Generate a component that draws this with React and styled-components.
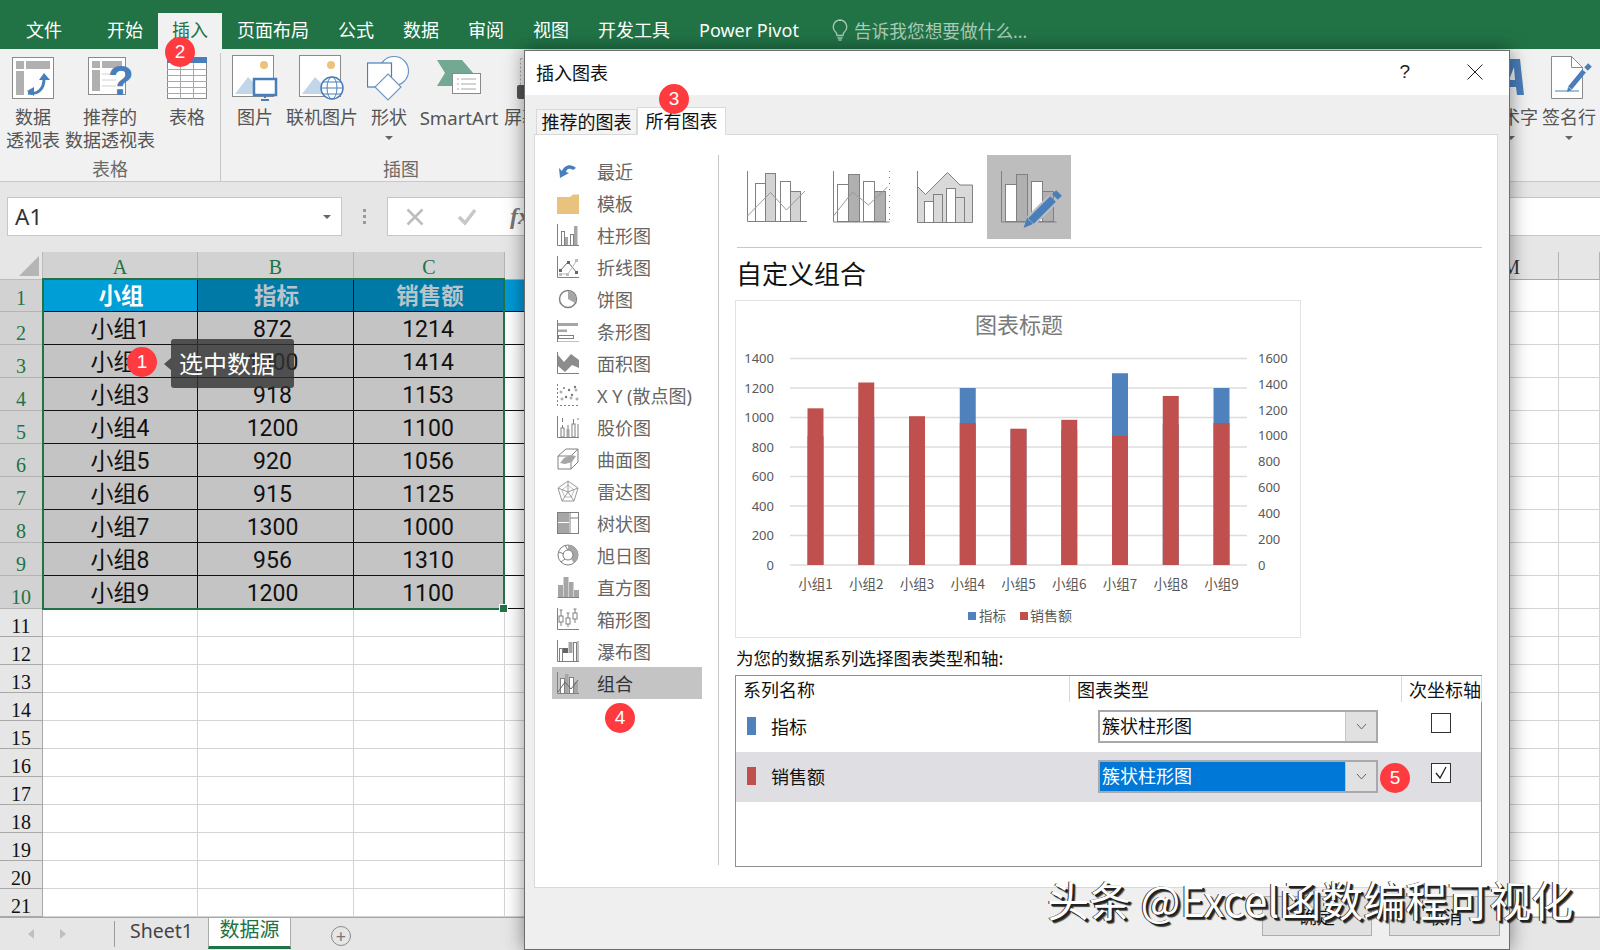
import React from "react";
import styled, { createGlobalStyle } from "styled-components";

const FONT = `"Noto Sans", "Noto Sans CJK SC", sans-serif`;
const CJK = `"Noto Sans CJK SC", "Noto Sans", sans-serif`;
const SERIF = `"Liberation Serif", serif`;

const GlobalStyle = createGlobalStyle`
  html, body { margin: 0; padding: 0; background: #fff; }
  * { box-sizing: border-box; }
  body { font-family: ${FONT}; }
`;

const Page = styled.div`
  position: relative;
  width: 1600px;
  height: 950px;
  overflow: hidden;
  display: flex;
  flex-direction: column;
  background: #fff;
`;

/* ---------- title tabs ---------- */
const TabBar = styled.div`
  height: 49px;
  flex: none;
  background: #217346;
  display: flex;
  align-items: flex-end;
  gap: 1px;
  padding-left: 12px;
`;

const MenuTab = styled.div`
  height: 36px;
  padding: 0 14px;
  display: flex;
  align-items: center;
  font-size: 18px;
  line-height: 1;
  padding-bottom: 2px;
  white-space: nowrap;
  color: ${(p) => (p.$active ? "#217346" : "#fff")};
  background: ${(p) => (p.$active ? "#f1f1f1" : "transparent")};
  margin-left: ${(p) => (p.$first ? "16px" : "0")};
`;

const TellMe = styled.div`
  height: 36px;
  margin-left: 18px;
  padding-bottom: 2px;
  display: flex;
  align-items: center;
  gap: 6px;
  font-size: 17.7px;
  color: #a9cbb8;
`;

/* ---------- ribbon ---------- */
const Ribbon = styled.div`
  height: 133px;
  flex: none;
  background: #f1f1f1;
  border-bottom: 1px solid #c9c9c9;
  display: flex;
  overflow: hidden;
`;

const Group = styled.div`
  display: flex;
  flex-direction: column;
  height: 128px;
  border-right: ${(p) => (p.$sep ? "1px solid #c6c6c6" : "none")};
  margin-top: 4px;
`;

const GroupButtons = styled.div`
  display: flex;
  height: 105px;
`;

const GroupLabel = styled.div`
  text-align: center;
  font-size: 18px;
  line-height: 24px;
  color: #6a6a6a;
`;

const RibbonButton = styled.div`
  width: ${(p) => p.$w}px;
  flex: none;
  display: flex;
  flex-direction: column;
  align-items: ${(p) => (p.$start ? "flex-start" : "center")};
  padding-left: ${(p) => (p.$start ? "9px" : "0")};
  color: #555;
  font-size: ${(p) => p.$fs || 18}px;
  line-height: 23px;
  text-align: center;
  white-space: nowrap;
`;

const RibbonIcon = styled.div`
  height: 50px;
  margin-bottom: 3px;
  margin-left: ${(p) => p.$shift || 0}px;
  display: flex;
  align-items: center;
`;

const Caret = styled.span`
  display: block;
  margin-top: ${(p) => (p.$flat ? "0" : "7px")};
  border-left: 4px solid transparent;
  border-right: 4px solid transparent;
  border-top: 4px solid #666;
`;

const RightGroup = styled.div`
  margin-left: auto;
  margin-top: 4px;
  display: flex;
`;

/* ---------- formula bar ---------- */
const FormulaRow = styled.div`
  height: 70px;
  flex: none;
  background: #e6e6e6;
  display: flex;
  align-items: flex-start;
  padding: 15px 0 0 7px;
`;

const NameBox = styled.div`
  width: 335px;
  height: 39px;
  background: #fff;
  border: 1px solid #c6c6c6;
  display: flex;
  align-items: center;
  justify-content: space-between;
  padding: 0 10px 0 7px;
  font-size: 22.5px;
  color: #333;
`;

const Dots = styled.div`
  width: 45px;
  height: 39px;
  display: flex;
  flex-direction: column;
  align-items: center;
  justify-content: center;
  gap: 3px;
  > i { width: 3px; height: 3px; background: #9a9a9a; display: block; }
`;

const FormulaBox = styled.div`
  flex: 1;
  height: 39px;
  background: #fff;
  border: 1px solid #c6c6c6;
  border-right: none;
  display: flex;
  align-items: center;
  padding-left: 18px;
  gap: 33px;
  font-family: ${SERIF};
  font-style: italic;
  font-weight: 700;
  font-size: 24px;
  color: #777;
`;

/* ---------- sheet ---------- */
const COLS = "43px 155px 156px 151px 100px 954px 41px";

const Sheet = styled.div`
  position: relative;
  flex: none;
`;

const SheetRow = styled.div`
  display: grid;
  grid-template-columns: ${COLS};
  height: ${(p) => p.$h}px;
`;

const Corner = styled.div`
  background: #e6e6e6;
  border-bottom: 1px solid #bbb;
  border-right: 1px solid #bbb;
  display: flex;
  align-items: flex-end;
  justify-content: flex-end;
  padding: 0 3px 3px 0;
`;

const ColHead = styled.div`
  background: ${(p) => (p.$sel ? "#d2d2d2" : "#e6e6e6")};
  border-right: 1px solid #b4b4b4;
  border-bottom: 1px solid #a8a8a8;
  font-family: ${SERIF};
  font-size: 20px;
  color: ${(p) => (p.$sel ? "#217346" : "#333")};
  display: flex;
  align-items: flex-end;
  justify-content: ${(p) => (p.$end ? "flex-end" : "center")};
  padding-right: ${(p) => (p.$end ? "38px" : "0")};
`;

const RowHead = styled.div`
  background: ${(p) => (p.$sel ? "#d2d2d2" : "#e6e6e6")};
  border-right: 1px solid #a8a8a8;
  border-bottom: 1px solid ${(p) => (p.$sel ? "#b4b4b4" : "#a8a8a8")};
  font-family: ${SERIF};
  font-size: 20px;
  line-height: 1;
  color: ${(p) => (p.$sel ? "#217346" : "#111")};
  display: flex;
  align-items: flex-end;
  justify-content: center;
  padding-bottom: ${(p) => p.$bottom || 0}px;
`;

const Cell = styled.div`
  background: ${(p) => p.$bg || "#fff"};
  color: ${(p) => p.$color || "#111"};
  font-family: "Roboto", ${CJK};
  font-size: ${(p) => (p.$bold ? "22.5px" : "23px")};
  font-weight: ${(p) => (p.$bold ? 700 : 400)};
  border-right: 1px solid ${(p) => p.$line || "#d4d4d4"};
  border-bottom: 1px solid ${(p) => p.$line || "#d4d4d4"};
  display: flex;
  align-items: center;
  justify-content: center;
  line-height: 1;
  padding-top: ${(p) => (p.$bold ? "2px" : "3px")};
  padding-left: ${(p) => (p.$bold ? "2px" : "0")};
  padding-right: ${(p) => p.$nudge || 0}px;
`;

const SelectionFrame = styled.div`
  position: absolute;
  left: 42px;
  top: 26px;
  width: 463px;
  height: 332px;
  border: 2px solid #217346;
  pointer-events: none;
  &::after {
    content: "";
    position: absolute;
    right: -5px;
    bottom: -5px;
    width: 7px;
    height: 7px;
    background: #217346;
    border: 1px solid #fff;
  }
`;

const SheetTabs = styled.div`
  flex: 1;
  background: #e6e6e6;
  border-top: 1px solid #a8a8a8;
  display: flex;
  align-items: stretch;
  padding-left: 28px;
  color: #444;
`;

const ScrollArrows = styled.div`
  width: 87px;
  margin: 3px 0;
  border-right: 1px solid #9c9c9c;
  display: flex;
  align-items: center;
  gap: 26px;
`;

const ArrowLeft = styled.i`
  width: 0;
  height: 0;
  border-top: 5px solid transparent;
  border-bottom: 5px solid transparent;
  border-right: 6px solid #c0c0c0;
`;

const ArrowRight = styled(ArrowLeft)`
  border-right: none;
  border-left: 6px solid #c0c0c0;
`;

const SheetTab = styled.div`
  height: ${(p) => (p.$active ? "31px" : "auto")};
  width: ${(p) => p.$w}px;
  display: flex;
  align-items: center;
  justify-content: center;
  font-size: ${(p) => (p.$active ? "20px" : "19.5px")};
  line-height: 1;
  padding-bottom: ${(p) => (p.$active ? "4px" : "7px")};
  background: ${(p) => (p.$active ? "#fff" : "transparent")};
  color: ${(p) => (p.$active ? "#217346" : "#444")};
  border-bottom: ${(p) => (p.$active ? "3px solid #217346" : "none")};
  border-left: ${(p) => (p.$active ? "1px solid #ababab" : "none")};
  border-right: ${(p) => (p.$active ? "1px solid #ababab" : "none")};
`;

const AddSheet = styled.div`
  width: 20px;
  height: 20px;
  border-radius: 50%;
  border: 1.5px solid #8a8a8a;
  margin: 8px 0 0 40px;
  display: flex;
  align-items: center;
  justify-content: center;
  font-size: 18px;
  line-height: 1;
  color: #777;
`;

/* ---------- overlays ---------- */
const Badge = styled.div`
  position: absolute;
  left: ${(p) => p.$x - 15}px;
  top: ${(p) => p.$y - 15}px;
  width: 30px;
  height: 30px;
  border-radius: 50%;
  background: #ff3b3f;
  color: #fff;
  font-family: "Liberation Sans", sans-serif;
  font-size: 19px;
  display: flex;
  align-items: center;
  justify-content: center;
  z-index: 5;
`;

const Tip = styled.div`
  position: absolute;
  left: 171px;
  top: 339px;
  width: 123px;
  height: 49px;
  background: rgba(50, 50, 50, 0.8);
  border-radius: 3px;
  color: #fff;
  font-size: 24px;
  line-height: 1;
  display: flex;
  align-items: center;
  padding: 0 0 2px 8px;
  font-family: ${CJK};
  z-index: 4;
  &::before {
    content: "";
    position: absolute;
    left: -7px;
    top: 19px;
    border-top: 6px solid transparent;
    border-bottom: 6px solid transparent;
    border-right: 7px solid rgba(50, 50, 50, 0.8);
  }
`;

const Watermark = styled.div`
  position: absolute;
  left: 1047px;
  top: 871px;
  font-family: ${CJK};
  font-size: 42px;
  line-height: 56px;
  white-space: nowrap;
  color: #fff;
  text-shadow: 2px 2px 0 #222, 3px 3px 1px #444, -1px 0 0 #333;
  z-index: 6;
`;

/* ---------- dialog ---------- */
const Dialog = styled.div`
  position: absolute;
  left: 524px;
  top: 50px;
  width: 986px;
  height: 900px;
  background: #efefef;
  border: 1px solid #6d6d6d;
  box-shadow: 0 0 18px rgba(0, 0, 0, 0.45);
  display: flex;
  flex-direction: column;
  font-family: ${CJK};
  z-index: 3;
`;

const DialogTitle = styled.div`
  height: 44px;
  flex: none;
  background: #fff;
  display: flex;
  align-items: center;
  padding: 0 26px 3px 11px;
  font-size: 18px;
  color: #111;
`;

const HelpMark = styled.div`
  margin-left: auto;
  font-family: "Liberation Sans", sans-serif;
  font-size: 19px;
  margin-right: 57px;
  color: #222;
`;

const DialogTabs = styled.div`
  height: 39px;
  flex: none;
  display: flex;
  align-items: flex-end;
  padding-left: 11px;
`;

const DialogTab = styled.div`
  height: ${(p) => (p.$active ? "28px" : "25px")};
  width: ${(p) => p.$w}px;
  font-size: 18px;
  line-height: 1;
  display: flex;
  align-items: center;
  justify-content: center;
  padding-bottom: 2px;
  color: #111;
  background: ${(p) => (p.$active ? "#fff" : "#f3f3f3")};
  border: 1px solid #d9d9d9;
  border-bottom: ${(p) => (p.$active ? "1px solid #fff" : "none")};
  margin-bottom: ${(p) => (p.$active ? "-1px" : "0")};
  position: relative;
  z-index: 1;
`;

const Panel = styled.div`
  height: 754px;
  width: 964px;
  flex: none;
  margin-left: 9px;
  background: #fff;
  border: 1px solid #d9d9d9;
  padding-top: 20px;
  display: flex;
  align-items: flex-start;
`;

const Nav = styled.div`
  width: 184px;
  height: 710px;
  flex: none;
  border-right: 1px solid #c8c8c8;
  padding-left: 17px;
`;

const NavItem = styled.div`
  width: 150px;
  height: 32px;
  display: flex;
  align-items: center;
  padding-left: 5px;
  gap: 18px;
  font-family: ${FONT};
  font-size: 18px;
  white-space: nowrap;
  color: ${(p) => (p.$active ? "#333" : "#666")};
  background: ${(p) => (p.$active ? "#c4c4c4" : "transparent")};
`;

const Content = styled.div`
  width: 764px;
  padding-left: 16px;
`;

const ThumbRow = styled.div`
  display: flex;
  height: 93px;
  border-bottom: 1px solid #c8c8c8;
  margin-left: 2px;
  width: 745px;
`;

const Thumb = styled.div`
  width: 84px;
  height: 84px;
  margin-left: ${(p) => (p.$first ? "-2px" : "0")};
  background: ${(p) => (p.$active ? "#bdbdbd" : "transparent")};
`;

const Heading = styled.div`
  height: 52px;
  font-size: 26px;
  line-height: 50px;
  padding-left: 1px;
  color: #111;
`;

const ChartBox = styled.div`
  width: 566px;
  height: 338px;
  border: 1px solid #e3e3e3;
`;

const SeriesLabel = styled.div`
  height: 37px;
  font-size: 17.5px;
  line-height: 40px;
  padding-left: 1px;
  color: #111;
  white-space: nowrap;
`;

const SeriesTable = styled.div`
  width: 747px;
  height: 192px;
  border: 1px solid #8b9095;
`;

const SeriesHead = styled.div`
  display: grid;
  grid-template-columns: 334px 332px 1fr;
  height: 26px;
  font-size: 18px;
  line-height: 1;
  color: #111;
`;

const HeadCell = styled.div`
  display: flex;
  align-items: center;
  padding-left: 7px;
  white-space: nowrap;
  border-right: 1px solid #d9d9d9;
`;

const SeriesRow = styled.div`
  height: 50px;
  display: flex;
  align-items: center;
  background: ${(p) => (p.$active ? "#dfdfe3" : "#fff")};
  padding: 0 0 2px 11px;
  font-size: 18px;
  color: #111;
`;

const Swatch = styled.div`
  width: 9px;
  height: 18px;
  background: ${(p) => p.$color};
  margin-right: 15px;
`;

const SeriesName = styled.div`
  width: 327px;
`;

const ComboBox = styled.div`
  width: 280px;
  height: 33px;
  display: flex;
  border: 2px solid #a9a9a9;
  background: ${(p) => (p.$active ? "#0078d7" : "#fff")};
  color: ${(p) => (p.$active ? "#fff" : "#111")};
`;

const ComboText = styled.div`
  flex: 1;
  padding-left: 2px;
  line-height: 27px;
  font-size: 18px;
`;

const ComboArrow = styled.div`
  width: 31px;
  background: #e1e1e1;
  border-left: 1px solid #c4c4c4;
  display: flex;
  align-items: center;
  justify-content: center;
`;

const CheckBox = styled.div`
  width: 20px;
  height: 20px;
  margin: -7px 0 0 53px;
  background: #fff;
  border: 1px solid #333;
  display: flex;
  align-items: center;
  justify-content: center;
`;

const Footer = styled.div`
  flex: 1;
  position: relative;
  display: flex;
  justify-content: flex-end;
  align-items: flex-start;
  gap: 17px;
  padding: 8px 9px 0 0;
`;

const FooterButton = styled.div`
  width: ${(p) => p.$w}px;
  height: 40px;
  background: #e1e1e1;
  border: 1px solid #adadad;
  display: flex;
  align-items: center;
  justify-content: center;
  font-size: 18px;
  color: #111;
`;

/* ---------- icons ---------- */
const G = "#808080";

const Svg = ({ s = 22, w, h, vb, children }) => (
  <svg width={w || s} height={h || s} viewBox={vb || `0 0 ${s} ${s}`} style={{ display: "block", flex: "none" }}>
    {children}
  </svg>
);

const Axis = () => <path d="M.5 0V21.5H22" fill="none" stroke={G} />;

const navIcons = {
  recent: (
    <Svg>
      <path d="M5 11C7 5 14 3 19 8l-3 2C13 8 10 8 9 12l3 1-9 5-1-10z" fill="#4a7ebb" />
    </Svg>
  ),
  folder: (
    <Svg>
      <path d="M0 5h13l3-3h6v20H0z" fill="#e9c27e" />
      <path d="M14 3.5l2-1.5h6" stroke="#fff" fill="none" />
    </Svg>
  ),
  column: (
    <Svg>
      <Axis />
      <rect x="4.5" y="7.5" width="3" height="14" fill="#fff" stroke={G} />
      <rect x="8" y="13" width="3" height="8" fill="#a6a6a6" />
      <rect x="13.5" y="10.5" width="3" height="11" fill="#fff" stroke={G} />
      <rect x="17" y="2" width="3.5" height="19" fill="#a6a6a6" />
    </Svg>
  ),
  line: (
    <Svg>
      <Axis />
      <path d="M3 15l8-9 9 11" fill="none" stroke="#6f6f6f" />
      <path d="M3 18h8l9-14" fill="none" stroke="#bdbdbd" />
      <g fill="#666">
        <rect x="2" y="13" width="3" height="3" />
        <rect x="10" y="5" width="3" height="3" />
        <rect x="18" y="15" width="3" height="3" />
      </g>
      <g fill="#bdbdbd">
        <rect x="2" y="17" width="3" height="3" />
        <rect x="9" y="17" width="3" height="3" />
        <rect x="18" y="3" width="3" height="3" />
      </g>
    </Svg>
  ),
  pie: (
    <Svg>
      <circle cx="11" cy="11" r="8.5" fill="#fff" stroke={G} strokeWidth="1.5" />
      <path d="M11 3a8 8 0 0 1 7 12l-7-4z" fill="#a6a6a6" />
    </Svg>
  ),
  bar: (
    <Svg>
      <path d="M.5 0V22H22" fill="none" stroke={G} />
      <rect x="1" y="3" width="20" height="3" fill="#a6a6a6" />
      <rect x="1" y="9.5" width="9" height="2.5" fill="#a6a6a6" />
      <rect x="1.5" y="15.5" width="15" height="3" fill="#fff" stroke={G} />
    </Svg>
  ),
  area: (
    <Svg>
      <path d="M.5 0V21.5H22" fill="none" stroke={G} />
      <path d="M1 3l6 7 7-8 8 6v8l-7-3-7 7-7-6z" fill="#8c8c8c" />
    </Svg>
  ),
  scatter: (
    <Svg>
      <path d="M.5 0V21.5H22" fill="none" stroke={G} strokeDasharray="2 2" />
      <g fill="#777">
        <circle cx="7" cy="4" r="1" />
        <circle cx="12" cy="6" r="1.2" />
        <circle cx="18" cy="3" r="1.2" />
        <circle cx="9" cy="13" r="1.2" />
        <circle cx="15" cy="11" r="1.2" />
      </g>
      <g fill="none" stroke="#999">
        <circle cx="4" cy="8" r="1" />
        <circle cx="5" cy="15" r="1" />
        <circle cx="14" cy="14" r="1" />
        <circle cx="19" cy="6" r="1" />
        <circle cx="20" cy="15" r="1" />
      </g>
    </Svg>
  ),
  stock: (
    <Svg>
      <Axis />
      <path d="M5.5 2v4M5.5 9v12M11 9v4M16.5 3v18M21 2v2M21 8v13" stroke={G} fill="none" />
      <rect x="9.5" y="13" width="3" height="8" fill="#a6a6a6" />
      <rect x="4" y="12" width="3" height="9" fill="#fff" stroke={G} />
      <rect x="15" y="8" width="3" height="13" fill="#fff" stroke={G} />
    </Svg>
  ),
  surface: (
    <Svg>
      <path d="M1 8l8-7h12v13l-7 7H1zM1 8h13v13M14 8l7-7" fill="none" stroke={G} />
      <path d="M3 15l4-5 7-3 5 1-4 6-7 2z" fill="#a6a6a6" />
    </Svg>
  ),
  radar: (
    <Svg>
      <path d="M11 1l10 7-4 13H5L1 8z" fill="none" stroke="#9a9a9a" />
      <path d="M11 5l6 5-2.5 7H7.5L5 10z" fill="none" stroke="#bdbdbd" />
      <path d="M11 1v11M21 8l-10 4M17 21l-6-9M5 21l6-9M1 8l10 4" stroke="#9a9a9a" fill="none" />
    </Svg>
  ),
  tree: (
    <Svg>
      <rect x=".5" y=".5" width="21" height="21" fill="#fff" stroke={G} />
      <rect x="1" y="1" width="11" height="9" fill="#a6a6a6" />
      <rect x="1" y="11" width="11" height="10" fill="#a6a6a6" />
      <path d="M13 0v22M13 6h9" stroke={G} fill="none" />
    </Svg>
  ),
  sunburst: (
    <Svg>
      <circle cx="11" cy="11" r="10" fill="#fff" stroke={G} />
      <path d="M11 1a10 10 0 0 1 6 18l-3-4a5 5 0 0 0-3-9z" fill="#a6a6a6" />
      <circle cx="11" cy="11" r="5" fill="none" stroke={G} />
      <path d="M2 8l5 2M4 18l4-3M8 1.5L11 6" stroke={G} fill="none" />
    </Svg>
  ),
  histogram: (
    <Svg>
      <path d="M.5 21.5H22" stroke={G} fill="none" />
      <rect x="1" y="9" width="5" height="12" fill="#a6a6a6" />
      <rect x="6.5" y="1" width="5" height="20" fill="#a6a6a6" />
      <rect x="12" y="6" width="4.5" height="15" fill="#a6a6a6" />
      <rect x="17" y="14" width="5" height="7" fill="#a6a6a6" />
    </Svg>
  ),
  box: (
    <Svg>
      <path d="M.5 0V21.5H22M4 2v16M11 5v14M18 1v14M2.5 2h3M9.5 5h3M16.5 1h3" stroke={G} fill="none" />
      <rect x="2" y="8" width="4" height="6" fill="#fff" stroke={G} />
      <rect x="9" y="10" width="4" height="6" fill="#fff" stroke={G} />
      <rect x="16" y="5" width="4" height="6" fill="#fff" stroke={G} />
    </Svg>
  ),
  waterfall: (
    <Svg>
      <path d="M.5 0V21.5H22M21 1v21" stroke={G} fill="none" />
      <rect x="2.5" y="8.5" width="3" height="13" fill="#fff" stroke={G} />
      <rect x="6" y="8" width="5" height="5" fill="#666" />
      <rect x="11.5" y="2" width="4" height="11" fill="#a6a6a6" />
      <rect x="16.5" y="2.5" width="3" height="19" fill="#fff" stroke={G} />
    </Svg>
  ),
  combo: (
    <Svg>
      <Axis />
      <rect x="3.5" y="6.5" width="4" height="15" fill="#fff" stroke={G} />
      <rect x="8" y="2" width="3.5" height="19" fill="#a6a6a6" />
      <rect x="12.5" y="5.5" width="4" height="16" fill="#fff" stroke={G} />
      <rect x="17" y="10" width="4" height="11" fill="#a6a6a6" />
      <path d="M1 20l7-10 6 7 7-9" fill="none" stroke="#666" />
    </Svg>
  ),
};

const PivotIcon = () => (
  <Svg s={42}>
    <rect x=".5" y=".5" width="41" height="41" fill="#fff" stroke="#8a8a8a" />
    <rect x="4" y="4" width="8" height="8" fill="#b0b0b0" />
    <rect x="14" y="4" width="24" height="8" fill="#b0b0b0" />
    <rect x="4" y="14" width="8" height="24" fill="#b0b0b0" />
    <path d="M16 36c10 2 16-4 16-14" fill="none" stroke="#4a7ebb" strokeWidth="3" />
    <path d="M27 23l5-7 6 7zM22 30v9l-7-5z" fill="#4a7ebb" />
  </Svg>
);

const RecommendIcon = () => (
  <Svg w={44} h={42} vb="0 0 44 42">
    <rect x=".5" y=".5" width="37" height="37" fill="#fff" stroke="#8a8a8a" />
    <rect x="4" y="4" width="8" height="7" fill="#b0b0b0" />
    <rect x="14" y="4" width="20" height="7" fill="#b0b0b0" />
    <rect x="4" y="13" width="8" height="21" fill="#b0b0b0" />
    <path d="M14 17h14M14 23h14M14 29h14" stroke="#d0d0d0" />
    <text x="20" y="38" fontFamily="Liberation Sans, sans-serif" fontWeight="700" fontSize="42" fill="#4a7ebb">?</text>
  </Svg>
);

const TableIcon = () => (
  <Svg w={40} h={42} vb="0 0 40 42">
    <rect x=".5" y=".5" width="39" height="41" fill="#fff" stroke="#8a8a8a" />
    <rect x="0" y="0" width="40" height="6" fill="#4a7ebb" />
    <path d="M13.5 6v36M26.5 6v36M0 12.5h40M0 18.5h40M0 24.5h40M0 30.5h40M0 36.5h40" stroke="#a8a8a8" />
  </Svg>
);

const Landscape = () => (
  <>
    <rect x=".5" y=".5" width="41" height="41" fill="#fff" stroke="#8a8a8a" />
    <circle cx="32" cy="10" r="4" fill="#eec27c" />
    <path d="M3 39l13-17 9 9 5 8z" fill="#c3d5e9" />
  </>
);

const PictureIcon = () => (
  <Svg w={46} h={46} vb="0 0 46 46">
    <Landscape />
    <rect x="22" y="24" width="22" height="16" fill="#fff" stroke="#4a7ebb" strokeWidth="2.5" />
    <path d="M33 40v3M29 45h8" stroke="#4a7ebb" strokeWidth="2" />
  </Svg>
);

const OnlineIcon = () => (
  <Svg w={46} h={46} vb="0 0 46 46">
    <Landscape />
    <circle cx="33" cy="33" r="11" fill="#fff" stroke="#4a7ebb" strokeWidth="1.5" />
    <ellipse cx="33" cy="33" rx="5" ry="11" fill="none" stroke="#4a7ebb" />
    <path d="M22 33h22M24 27h18M24 39h18" stroke="#4a7ebb" />
  </Svg>
);

const ShapesIcon = () => (
  <Svg w={45} h={45} vb="0 0 45 45">
    <circle cx="27" cy="15" r="14.5" fill="#fff" stroke="#6c97c9" strokeWidth="1.2" />
    <rect x=".5" y="7" width="24" height="24" fill="#fff" stroke="#4a7ebb" strokeWidth="1.2" />
    <path d="M21 18l13 13-13 13L8 31z" fill="#fff" stroke="#6c97c9" strokeWidth="1.2" />
  </Svg>
);

const SmartArtIcon = () => (
  <Svg w={44} h={36} vb="0 0 44 36">
    <path d="M0 0h25l12 14H15v12H0l8-13z" fill="#73a892" />
    <rect x="15.5" y="13.5" width="28" height="20" fill="#fff" stroke="#8a8a8a" />
    <path d="M20 19h2M24 19h15M20 24h2M24 24h15M20 29h2M24 29h15" stroke="#a8a8a8" />
  </Svg>
);

const ScreenIcon = () => (
  <Svg w={24} h={42} vb="0 0 24 42">
    <rect x="16.5" y="1.5" width="7" height="30" fill="none" stroke="#aaa" strokeDasharray="2 2" />
    <rect x="13" y="28" width="11" height="14" rx="2" fill="#555" />
  </Svg>
);

const WordArtIcon = () => (
  <Svg w={50} h={42} vb="0 0 50 42">
    <path d="M8 38L24 2h10l4 36h-7l-1-8H21l-4 8zM23 23h6l-1-13z" fill="#4a7ebb" />
  </Svg>
);

const SignIcon = () => (
  <Svg w={42} h={44} vb="0 0 42 44">
    <path d="M.5.5h20l11 11v31H.5z" fill="#fff" stroke="#8a8a8a" />
    <path d="M20.5.5v11h11" fill="none" stroke="#8a8a8a" />
    <path d="M4 35h24" stroke="#4a7ebb" />
    <path d="M19 32l14-17M35 13l4-4" stroke="#4a7ebb" strokeWidth="5" fill="none" />
    <path d="M16 36l1-5 4 3z" fill="#4a7ebb" />
  </Svg>
);

const BulbIcon = () => (
  <Svg w={16} h={22} vb="0 0 16 22">
    <path d="M8 1a7 7 0 0 0-4 12.5c1 1 1 2 1 3h6c0-1 0-2 1-3A7 7 0 0 0 8 1zM5.5 19h5M6.5 21h3" fill="none" stroke="#a9cbb8" strokeWidth="1.3" />
  </Svg>
);

const Chevron = ({ color = "#666" }) => (
  <Svg w={11} h={7} vb="0 0 11 7">
    <path d="M1 1l4.5 5L10 1" fill="none" stroke={color} />
  </Svg>
);

const CloseIcon = () => (
  <Svg w={16} h={16} vb="0 0 16 16">
    <path d="M.5.5l15 15M15.5.5l-15 15" stroke="#222" />
  </Svg>
);

const CancelIcon = () => (
  <Svg w={18} h={18} vb="0 0 18 18">
    <path d="M1.5 1.5l15 15M16.5 1.5l-15 15" stroke="#bdbdbd" strokeWidth="2.5" />
  </Svg>
);

const EnterIcon = () => (
  <Svg w={20} h={18} vb="0 0 20 18">
    <path d="M2 9l6 6L18 2" fill="none" stroke="#c8c8c8" strokeWidth="3.5" />
  </Svg>
);

const ThumbOne = () => (
  <Svg s={84}>
    <path d="M12.5 16v50.5H72" fill="none" stroke={G} />
    <rect x="20.5" y="28.5" width="10" height="38" fill="#fff" stroke={G} />
    <rect x="30.5" y="18.5" width="10" height="48" fill="#d3d3d3" stroke={G} />
    <rect x="45.5" y="26.5" width="10" height="40" fill="#fff" stroke={G} />
    <rect x="55.5" y="36.5" width="10" height="30" fill="#d3d3d3" stroke={G} />
    <path d="M12.5 61l23-23.5L51.5 55 70 36" fill="none" stroke="#999" />
  </Svg>
);

const ThumbTwo = () => (
  <Svg s={84}>
    <path d="M14.5 16v51h56" fill="none" stroke={G} />
    <path d="M70.5 16v51" fill="none" stroke="#777" strokeDasharray="1 5" />
    <rect x="18.5" y="29.5" width="11" height="37" fill="#fff" stroke={G} />
    <rect x="29.5" y="19.5" width="11" height="47" fill="#b0b0b0" stroke={G} />
    <rect x="44.5" y="26.5" width="11" height="40" fill="#fff" stroke={G} />
    <rect x="55.5" y="36.5" width="11" height="30" fill="#b0b0b0" stroke={G} />
    <path d="M14.5 61l19-24 16 13 19-18" fill="none" stroke="#999" />
  </Svg>
);

const ThumbThree = () => (
  <Svg s={84}>
    <path d="M14.5 16v51.5h55V30H57L44.5 17.5 22.5 39.5l-8-8z" fill="#d9d9d9" stroke={G} />
    <rect x="21.5" y="46.5" width="9" height="21" fill="#fff" stroke={G} />
    <rect x="30.5" y="39.5" width="9" height="28" fill="#d9d9d9" stroke={G} />
    <rect x="43.5" y="33.5" width="9" height="34" fill="#fff" stroke={G} />
    <rect x="52.5" y="42.5" width="9" height="25" fill="#d9d9d9" stroke={G} />
  </Svg>
);

const ThumbFour = () => (
  <Svg s={84}>
    <path d="M14.5 16v51h55" fill="none" stroke={G} />
    <rect x="18.5" y="29.5" width="11" height="37" fill="#fff" stroke={G} />
    <rect x="29.5" y="19.5" width="11" height="47" fill="#b0b0b0" stroke={G} />
    <rect x="44.5" y="26.5" width="11" height="40" fill="#fff" stroke={G} />
    <rect x="55.5" y="36.5" width="11" height="30" fill="#b0b0b0" stroke={G} />
    <path d="M44 66l22-22" stroke="#bdbdbd" strokeWidth="12" />
    <path d="M44 66l22-22" stroke="#4a7ebb" strokeWidth="8" />
    <path d="M36.5 73l3.5-10 6 6z" fill="#4a7ebb" />
    <path d="M68 42l4-4" stroke="#4a7ebb" strokeWidth="8" />
  </Svg>
);

/* ---------- chart ---------- */
const CHART_BOTTOM = 265;
const CHART_H = 206.5;
const primary = [872, 1000, 918, 1200, 920, 915, 1300, 956, 1200];
const secondary = [1214, 1414, 1153, 1100, 1056, 1125, 1000, 1310, 1100];

function ComboChart() {
  const textProps = { fontFamily: FONT, fontSize: 13, fill: "#595959" };
  return (
    <svg width="564" height="336" viewBox="0 1 564 336" style={{ display: "block" }}>
      <text x="283" y="33" textAnchor="middle" fontFamily={CJK} fontSize="22" fill="#7a7a7a">图表标题</text>
      {[0, 200, 400, 600, 800, 1000, 1200, 1400].map((v) => {
        const y = CHART_BOTTOM - (v / 1400) * CHART_H;
        return (
          <g key={v}>
            <line x1="54" x2="511" y1={y} y2={y} stroke="#dcdcdc" strokeWidth="1.3" />
            <text x="38" y={y + 4.5} textAnchor="end" {...textProps}>{v}</text>
          </g>
        );
      })}
      {[0, 200, 400, 600, 800, 1000, 1200, 1400, 1600].map((v) => (
        <text key={v} x="522" y={CHART_BOTTOM - (v / 1600) * CHART_H + 4.5} {...textProps}>{v}</text>
      ))}
      {primary.map((v, i) => {
        const cx = 79.5 + i * 50.75;
        const h1 = (v / 1400) * CHART_H;
        const h2 = (secondary[i] / 1600) * CHART_H;
        return (
          <g key={i}>
            <rect x={cx - 8} y={CHART_BOTTOM - h1} width="16" height={h1} fill="#4f81bd" />
            <rect x={cx - 8} y={CHART_BOTTOM - h2} width="16" height={h2} fill="#c0504d" />
            <text x={cx} y="289" textAnchor="middle" fontFamily={CJK} fontSize="13.5" fill="#595959">{`小组${i + 1}`}</text>
          </g>
        );
      })}
      <rect x="232" y="312" width="8" height="8" fill="#4f81bd" />
      <text x="243" y="321" fontFamily={CJK} fontSize="13.5" fill="#595959">指标</text>
      <rect x="284" y="312" width="8" height="8" fill="#c0504d" />
      <text x="294" y="321" fontFamily={CJK} fontSize="14" fill="#595959">销售额</text>
    </svg>
  );
}

/* ---------- data ---------- */
const menu = ["开始", "插入", "页面布局", "公式", "数据", "审阅", "视图", "开发工具", "Power Pivot"];

const navItems = [
  ["recent", "最近"],
  ["folder", "模板"],
  ["column", "柱形图"],
  ["line", "折线图"],
  ["pie", "饼图"],
  ["bar", "条形图"],
  ["area", "面积图"],
  ["scatter", "X Y (散点图)"],
  ["stock", "股价图"],
  ["surface", "曲面图"],
  ["radar", "雷达图"],
  ["tree", "树状图"],
  ["sunburst", "旭日图"],
  ["histogram", "直方图"],
  ["box", "箱形图"],
  ["waterfall", "瀑布图"],
  ["combo", "组合"],
];

const rows = primary.map((v, i) => [`小组${i + 1}`, v, secondary[i]]);
const emptyRows = [11, 12, 13, 14, 15, 16, 17, 18, 19, 20, 21];
const cellNudge = [0, 6, 2];

function SeriesLine({ color, name, active, checked }) {
  return (
    <SeriesRow $active={active}>
      <Swatch $color={color} />
      <SeriesName>{name}</SeriesName>
      <ComboBox $active={active}>
        <ComboText>簇状柱形图</ComboText>
        <ComboArrow>
          <Chevron />
        </ComboArrow>
      </ComboBox>
      <CheckBox>
        {checked && (
          <Svg w={14} h={14} vb="0 0 14 14">
            <path d="M2 7l4 5 6-11" fill="none" stroke="#222" strokeWidth="1.3" />
          </Svg>
        )}
      </CheckBox>
    </SeriesRow>
  );
}

export default function App() {
  return (
    <Page>
      <GlobalStyle />
      <TabBar>
        <MenuTab>文件</MenuTab>
        {menu.map((m, i) => (
          <MenuTab key={m} $first={i === 0} $active={m === "插入"}>{m}</MenuTab>
        ))}
        <TellMe>
          <BulbIcon />
          告诉我您想要做什么...
        </TellMe>
      </TabBar>

      <Ribbon>
        <Group $sep>
          <GroupButtons>
            <RibbonButton $w={66}>
              <RibbonIcon><PivotIcon /></RibbonIcon>
              数据<br />透视表
            </RibbonButton>
            <RibbonButton $w={88}>
              <RibbonIcon><RecommendIcon /></RibbonIcon>
              推荐的<br />数据透视表
            </RibbonButton>
            <RibbonButton $w={66}>
              <RibbonIcon><TableIcon /></RibbonIcon>
              表格
            </RibbonButton>
          </GroupButtons>
          <GroupLabel>表格</GroupLabel>
        </Group>
        <Group>
          <GroupButtons>
            <RibbonButton $w={68}>
              <RibbonIcon><PictureIcon /></RibbonIcon>
              图片
            </RibbonButton>
            <RibbonButton $w={66}>
              <RibbonIcon><OnlineIcon /></RibbonIcon>
              联机图片
            </RibbonButton>
            <RibbonButton $w={68}>
              <RibbonIcon><ShapesIcon /></RibbonIcon>
              形状
              <Caret />
            </RibbonButton>
            <RibbonButton $w={72} $fs={18.6}>
              <RibbonIcon><SmartArtIcon /></RibbonIcon>
              SmartArt
            </RibbonButton>
            <RibbonButton $w={86} $start>
              <RibbonIcon><ScreenIcon /></RibbonIcon>
              屏幕截图
            </RibbonButton>
          </GroupButtons>
          <GroupLabel>插图</GroupLabel>
        </Group>
        <RightGroup>
          <RibbonButton $w={54}>
            <RibbonIcon><WordArtIcon /></RibbonIcon>
            艺术字
            <Caret />
          </RibbonButton>
          <RibbonButton $w={62}>
            <RibbonIcon $shift={6}><SignIcon /></RibbonIcon>
            签名行
            <Caret />
          </RibbonButton>
        </RightGroup>
      </Ribbon>

      <FormulaRow>
        <NameBox>
          A1
          <Caret $flat />
        </NameBox>
        <Dots><i /><i /><i /></Dots>
        <FormulaBox>
          <CancelIcon />
          <EnterIcon />
          <span>fx</span>
        </FormulaBox>
      </FormulaRow>

      <Sheet>
        <SheetRow $h={28}>
          <Corner>
            <Svg s={20}>
              <path d="M20 0v20H0z" fill="#b5b5b5" />
            </Svg>
          </Corner>
          <ColHead $sel>A</ColHead>
          <ColHead $sel>B</ColHead>
          <ColHead $sel>C</ColHead>
          <ColHead />
          <ColHead $end>M</ColHead>
          <ColHead />
        </SheetRow>

        <SheetRow $h={32}>
          <RowHead $sel $bottom={3}>1</RowHead>
          <Cell $bg="#009ed6" $color="#fff" $bold $line="#111">小组</Cell>
          <Cell $bg="#0079a7" $color="#b9c4ca" $bold $line="#111">指标</Cell>
          <Cell $bg="#0079a7" $color="#b9c4ca" $bold $line="#111">销售额</Cell>
          <Cell $bg="#0099d5" $line="#111" />
          <Cell />
          <Cell />
        </SheetRow>
        {rows.map((r, i) => (
          <SheetRow key={r[0]} $h={33}>
            <RowHead $sel $bottom={1}>{i + 2}</RowHead>
            {r.map((c, j) => (
              <Cell key={j} $bg="#c4c4c4" $line="#111" $nudge={cellNudge[j]}>{c}</Cell>
            ))}
            <Cell $line="#111" />
            <Cell />
            <Cell />
          </SheetRow>
        ))}
        {emptyRows.map((n) => (
          <SheetRow key={n} $h={28}>
            <RowHead>{n}</RowHead>
            <Cell />
            <Cell />
            <Cell />
            <Cell />
            <Cell />
            <Cell />
          </SheetRow>
        ))}
        <SelectionFrame />
      </Sheet>

      <SheetTabs>
        <ScrollArrows>
          <ArrowLeft />
          <ArrowRight />
        </ScrollArrows>
        <SheetTab $w={93}>Sheet1</SheetTab>
        <SheetTab $w={83} $active>数据源</SheetTab>
        <AddSheet>+</AddSheet>
      </SheetTabs>

      <Dialog>
        <DialogTitle>
          插入图表
          <HelpMark>?</HelpMark>
          <CloseIcon />
        </DialogTitle>
        <DialogTabs>
          <DialogTab $w={101}>推荐的图表</DialogTab>
          <DialogTab $w={89} $active>所有图表</DialogTab>
        </DialogTabs>
        <Panel>
          <Nav>
            {navItems.map(([icon, label]) => (
              <NavItem key={icon} $active={icon === "combo"}>
                {navIcons[icon]}
                {label}
              </NavItem>
            ))}
          </Nav>
          <Content>
            <ThumbRow>
              <Thumb $first><ThumbOne /></Thumb>
              <Thumb><ThumbTwo /></Thumb>
              <Thumb><ThumbThree /></Thumb>
              <Thumb $active><ThumbFour /></Thumb>
            </ThumbRow>
            <Heading>自定义组合</Heading>
            <ChartBox>
              <ComboChart />
            </ChartBox>
            <SeriesLabel>为您的数据系列选择图表类型和轴:</SeriesLabel>
            <SeriesTable>
              <SeriesHead>
                <HeadCell>系列名称</HeadCell>
                <HeadCell>图表类型</HeadCell>
                <HeadCell>次坐标轴</HeadCell>
              </SeriesHead>
              <SeriesLine color="#4f81bd" name="指标" />
              <SeriesLine color="#c0504d" name="销售额" active checked />
            </SeriesTable>
          </Content>
        </Panel>
        <Footer>
          <FooterButton $w={110}>确定</FooterButton>
          <FooterButton $w={111}>取消</FooterButton>
        </Footer>
      </Dialog>

      <Tip>选中数据</Tip>
      <Badge $x={142} $y={362}>1</Badge>
      <Badge $x={180} $y={52}>2</Badge>
      <Badge $x={674} $y={99}>3</Badge>
      <Badge $x={620} $y={718}>4</Badge>
      <Badge $x={1395} $y={778}>5</Badge>
      <Watermark>头条 @Excel函数编程可视化</Watermark>
    </Page>
  );
}
